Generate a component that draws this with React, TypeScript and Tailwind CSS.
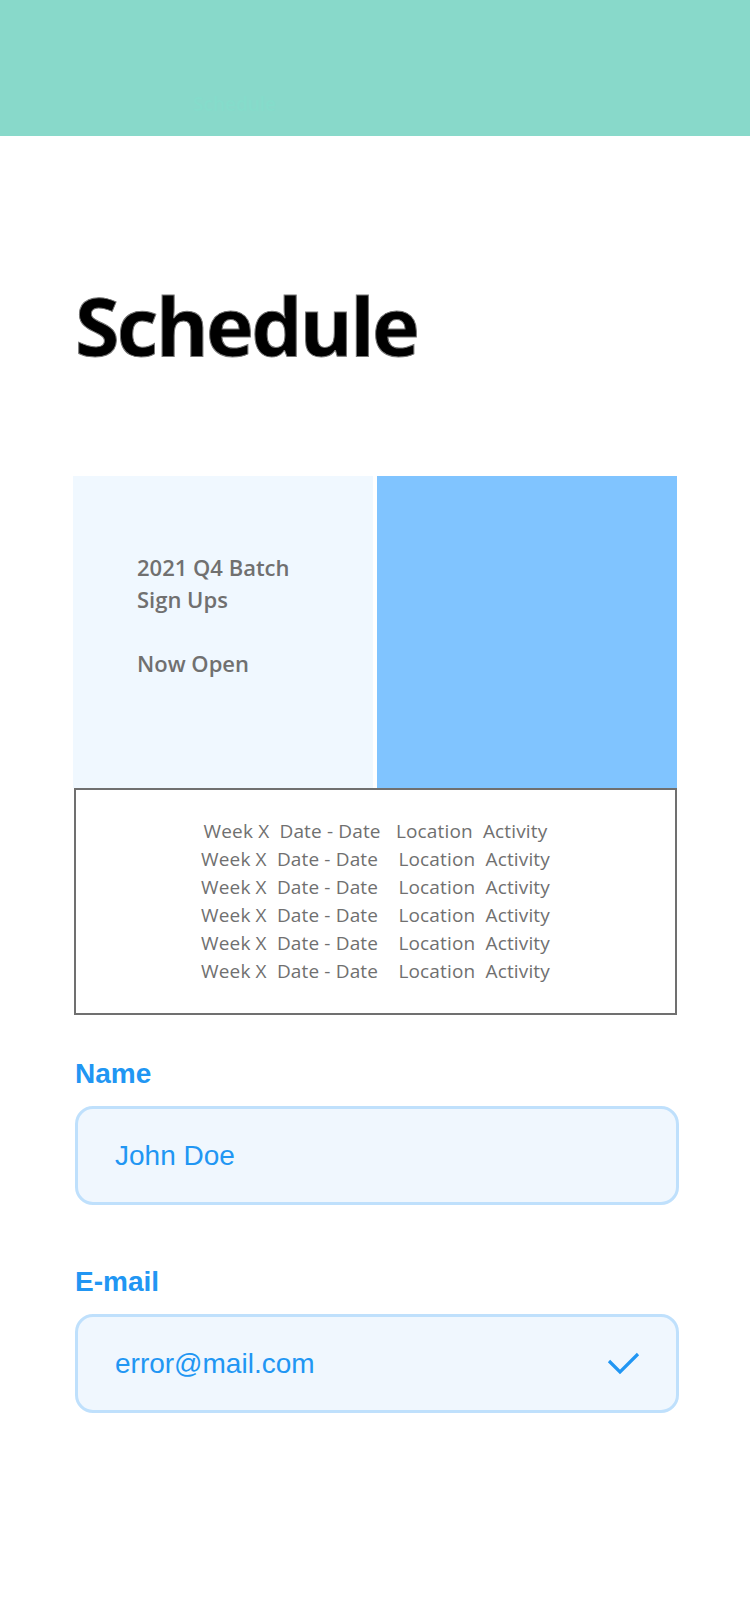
import React from "react";

const rows = [
  "Week X  Date - Date   Location  Activity",
  "Week X  Date - Date    Location  Activity",
  "Week X  Date - Date    Location  Activity",
  "Week X  Date - Date    Location  Activity",
  "Week X  Date - Date    Location  Activity",
  "Week X  Date - Date    Location  Activity",
];

const segoe = { fontFamily: '"Open Sans", "Noto Sans", sans-serif' };
const arial = { fontFamily: '"Liberation Sans", Arial, sans-serif' };

function Field({ label, value, valid }: { label: string; value: string; valid?: boolean }) {
  return (
    <div className="flex flex-col">
      <label className="text-[28px] leading-[32px] font-bold text-[#2196f3]" style={arial}>
        {label}
      </label>
      <div className="mt-4 h-[99px] rounded-[18px] border-[3px] border-[#bfe0fc] bg-[#f0f7fe] pl-[37px] pr-[35px] flex items-center justify-between">
        <span className="text-[28px] text-[#2196f3]" style={arial}>
          {value}
        </span>
        {valid && (
          <svg width="34" height="26" viewBox="0 0 34 26" fill="none">
            <path d="M2 10 L13 21 L31 3" stroke="#2196f3" strokeWidth="3.2" />
          </svg>
        )}
      </div>
    </div>
  );
}

export default function App() {
  return (
    <div className="min-h-[1624px] bg-white">
      {/* top bar */}
      <div className="h-[136px] bg-[#88d9ca] pl-[193px] pt-[90px]">
        <span className="text-[19px] font-semibold text-[#85dccb]" style={segoe}>
          Schedule
        </span>
      </div>

      <div className="w-[604px] mx-auto">
        <h1
          className="mt-[149px] pl-[2px] text-[81px] leading-[80px] font-bold text-black tracking-[-2.8px] [-webkit-text-stroke:1px_#777]"
          style={segoe}
        >
          Schedule
        </h1>

        <div className="mt-[111px] flex gap-1">
          <div className="w-[300px] h-[312px] bg-[#f0f8ff] pl-[64px] pt-[75px]">
            <p className="text-[22px] leading-[32px] font-semibold text-[#707070]" style={segoe}>
              2021 Q4 Batch
              <br />
              Sign Ups
              <br />
              <br />
              Now Open
            </p>
          </div>
          <div className="w-[300px] h-[312px] bg-[#80c4ff]" />
        </div>

        <div className="ml-[1px] border-2 border-[#707070] pt-[27px] pb-[28px] flex flex-col items-center">
          {rows.map((r, i) => (
            <div
              key={i}
              className="whitespace-pre text-[19px] leading-[28px] tracking-[0.15px] text-[#707070]"
              style={segoe}
            >
              {r}
            </div>
          ))}
        </div>

        <div className="mt-[43px] ml-[2px] -mr-[2px] flex flex-col gap-[61px]">
          <Field label="Name" value="John Doe" />
          <Field label="E-mail" value="error@mail.com" valid />
        </div>
      </div>
    </div>
  );
}
